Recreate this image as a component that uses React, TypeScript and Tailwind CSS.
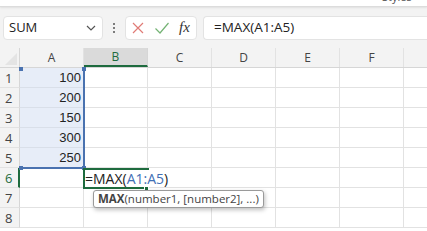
import React from 'react';

const cols = ['A', 'B', 'C', 'D', 'E', 'F', ''];
const values: Record<number, string> = { 1: '100', 2: '200', 3: '150', 4: '300', 5: '250' };

const font = { fontFamily: '"Open Sans", "Noto Sans", sans-serif' };

export default function App() {
  return (
    <div className="relative w-[427px] h-[231px] overflow-hidden bg-white text-[#333]" style={font}>
      {/* ribbon bottom edge */}
      <div className="h-[7px] bg-white relative overflow-hidden border-b border-[#dcdcdc] shadow-[0_1px_2px_rgba(0,0,0,0.08)]">
        <span className="absolute left-[382px] top-[-11px] text-[11px] text-[#555]">Styles</span>
      </div>

      {/* formula bar */}
      <div className="h-[41px] bg-[#f3f3f3] flex items-center pl-[3px] gap-0">
        <div className="w-[100px] h-[24px] bg-white rounded-[4px] border border-[#e3e3e3] flex items-center justify-between pl-[5px] pr-[6px]">
          <span className="text-[13px] text-[#222]">SUM</span>
          <svg width="10" height="6" viewBox="0 0 10 6" className="mt-[1px]">
            <path d="M1 1l4 4 4-4" fill="none" stroke="#555" strokeWidth="1.2" />
          </svg>
        </div>
        <div className="w-[22px] flex flex-col items-center justify-center gap-[2px]">
          <span className="w-[2px] h-[2px] bg-[#555] rounded-full" />
          <span className="w-[2px] h-[2px] bg-[#555] rounded-full" />
          <span className="w-[2px] h-[2px] bg-[#555] rounded-full" />
        </div>
        <div className="w-[72px] h-[24px] bg-white rounded-[4px] border border-[#e3e3e3] flex items-center pl-[5px] gap-[9px]">
          <svg width="14" height="14" viewBox="0 0 14 14">
            <path d="M2 2l10 10M12 2L2 12" stroke="#e07b76" strokeWidth="1.2" />
          </svg>
          <svg width="16" height="14" viewBox="0 0 16 14">
            <path d="M1.5 7.5l4.5 4.5L14.5 2" fill="none" stroke="#74b374" strokeWidth="1.2" />
          </svg>
          <span className="italic text-[15px] text-[#333] leading-none" style={{ fontFamily: '"Liberation Serif", serif' }}>
            fx
          </span>
        </div>
        <div className="ml-[6px] flex-1 h-[24px] bg-white rounded-l-[4px] border border-r-0 border-[#e3e3e3] flex items-center pl-[10px]">
          <span className="text-[13.5px] text-[#222]">=MAX(A1:A5)</span>
        </div>
      </div>

      {/* grid */}
      <div className="relative">
        <div className="flex h-[20px] bg-[#f3f3f3] border-b border-[#d6d6d6]">
          <div className="w-[20px] shrink-0 relative border-r border-[#d6d6d6]">
            <svg width="12" height="12" viewBox="0 0 12 12" className="absolute right-[2px] bottom-[2px]">
              <path d="M12 0V12H0z" fill="#e4e4e4" />
            </svg>
          </div>
          {cols.map((c) => (
            <div
              key={c || 'g'}
              className={
                c === 'B'
                  ? 'w-[64px] shrink-0 flex items-center justify-center text-[12px] text-[#1e6b3e] bg-[#dadada] border-r border-[#d6d6d6] border-b-2 border-b-[#1e6b3e]'
                  : 'w-[64px] shrink-0 flex items-center justify-center text-[12px] text-[#444] border-r border-[#e2e2e2]'
              }
            >
              {c}
            </div>
          ))}
        </div>
        {[1, 2, 3, 4, 5, 6, 7, 8].map((r) => (
          <div key={r} className="flex h-[20px]">
            <div
              className={
                r === 6
                  ? 'w-[20px] shrink-0 bg-[#f3f3f3] border-b border-[#e2e2e2] border-r-2 border-r-[#1e6b3e] text-[#1e6b3e] text-[13px] pl-[5px] leading-[20px]'
                  : 'w-[20px] shrink-0 bg-[#f3f3f3] border-b border-[#e2e2e2] border-r border-r-[#d6d6d6] text-[#444] text-[13px] pl-[5px] leading-[20px]'
              }
            >
              {r}
            </div>
            {cols.map((c) => (
              <div
                key={c || 'g'}
                className={
                  c === 'A' && r <= 5
                    ? 'w-[64px] shrink-0 bg-[#e7edf8] border-r border-b border-[#d9dfe9] text-right pr-[2px] text-[13px] leading-[20px] text-[#222]'
                    : 'w-[64px] shrink-0 border-r border-b border-[#e2e2e2] text-[13px] leading-[20px]'
                }
                style={c === 'A' ? { fontFamily: '"Liberation Sans", Arial, sans-serif' } : undefined}
              >
                {c === 'A' ? values[r] ?? '' : ''}
              </div>
            ))}
          </div>
        ))}

        {/* range highlight A1:A5 */}
        <div className="absolute left-[20px] top-[20px] w-[65px] h-[101px] border-r-2 border-b-2 border-[#4a72b0] pointer-events-none" />
        <div className="absolute left-[19px] top-[19px] w-[4px] h-[4px] bg-[#4a72b0]" />
        <div className="absolute left-[82px] top-[19px] w-[4px] h-[4px] bg-[#4a72b0]" />
        <div className="absolute left-[19px] top-[118px] w-[4px] h-[4px] bg-[#4a72b0]" />
        <div className="absolute left-[82px] top-[118px] w-[4px] h-[4px] bg-[#4a72b0]" />

        {/* active cell B6 in edit mode */}
        <div className="absolute left-[83px] top-[120px] w-[66px] h-[21px] border-2 border-r-0 border-[#1e6b3e] bg-white" />
        <div className="absolute left-[85px] top-[122px] h-[17px] bg-white flex items-center pr-[2px]">
          <span className="text-[14px] text-[#222] leading-none whitespace-nowrap">
            =MAX(<span className="text-[#3f6fb5]">A1:A5</span>)
          </span>
        </div>
        <div className="absolute left-[144px] top-[138px] w-[5px] h-[5px] bg-[#1e6b3e] border border-white" />

        {/* tooltip */}
        <div className="absolute left-[93px] top-[142px] h-[18px] px-[4px] bg-white border border-[#9a9a9a] rounded-[3px] shadow-[1px_2px_4px_rgba(0,0,0,0.25)] flex items-center">
          <span className="text-[11.5px] text-[#444] leading-none whitespace-nowrap">
            <b className="font-bold">MAX</b>(number1, [number2], ...)
          </span>
        </div>
      </div>
    </div>
  );
}
